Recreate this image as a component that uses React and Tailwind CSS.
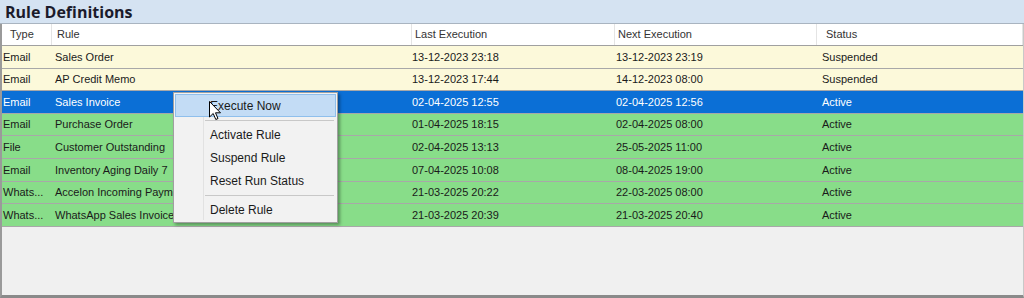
import React from "react";

const cols = [
  { w: "w-[50px]", pl: "pl-[1px]" },
  { w: "w-[360px]", pl: "pl-[3px]" },
  { w: "w-[203px]", pl: "pl-0" },
  { w: "w-[202px]", pl: "pl-[1px]" },
  { w: "flex-1", pl: "pl-[5px]" },
];

const rows = [
  ["Email", "Sales Order", "13-12-2023 23:18", "13-12-2023 23:19", "Suspended", "y"],
  ["Email", "AP Credit Memo", "13-12-2023 17:44", "14-12-2023 08:00", "Suspended", "y"],
  ["Email", "Sales Invoice", "02-04-2025 12:55", "02-04-2025 12:56", "Active", "s"],
  ["Email", "Purchase Order", "01-04-2025 18:15", "02-04-2025 08:00", "Active", "g"],
  ["File", "Customer Outstanding", "02-04-2025 13:13", "25-05-2025 11:00", "Active", "g"],
  ["Email", "Inventory Aging Daily 7", "07-04-2025 10:08", "08-04-2025 19:00", "Active", "g"],
  ["Whats...", "Accelon Incoming Payment", "21-03-2025 20:22", "22-03-2025 08:00", "Active", "g"],
  ["Whats...", "WhatsApp Sales Invoice", "21-03-2025 20:39", "21-03-2025 20:40", "Active", "g"],
];

const bgFor = {
  y: "bg-[#fcf9da] text-[#1a1a1a]",
  s: "bg-[#0b6fd6] text-white",
  g: "bg-[#88dd89] text-[#1a1a1a]",
};

function MenuItem({ children, active }) {
  return (
    <div
      className={
        "h-[23px] flex items-center pl-[34px] text-[12px] text-[#1a1a1a] " +
        (active ? "bg-[#c3dcf5] border border-[#8fbfec]" : "border border-transparent")
      }
    >
      {children}
    </div>
  );
}

function Sep() {
  return (
    <div className="h-[6px] flex items-center pl-[30px] pr-[2px]">
      <div className="h-px w-full bg-[#c8c8c8]" />
    </div>
  );
}

export default function App() {
  return (
    <div
      className="w-[1024px] h-[298px] bg-[#f0f0f0] flex flex-col relative overflow-hidden"
      style={{ fontFamily: '"Liberation Sans", Arial, sans-serif' }}
    >
      <div className="h-[24px] bg-[#d5e3f2] border-b border-[#a9b4c0] flex items-center pl-[5px]">
        <span
          className="text-[16px] font-bold text-[#1b1b2b]"
          style={{ fontFamily: '"Open Sans", "Noto Sans", sans-serif' }}
        >
          Rule Definitions
        </span>
      </div>
      <div className="flex-1 flex flex-col border-l-2 border-[#9a9a9a] border-r border-r-[#c8c8c8] border-b-[3px] border-b-[#8a8a8a]">
        <div className="h-[22px] bg-white border-b border-[#a0a0a0] flex text-[11px] text-[#333]">
          {["Type", "Rule", "Last Execution", "Next Execution", "Status"].map((h, i) => (
            <div
              key={h}
              className={
                cols[i].w +
                " flex items-center border-r border-[#e4e4e4] " +
                (i === 0 ? "pl-[8px]" : i === 1 ? "pl-[5px]" : i === 4 ? "pl-[9px]" : "pl-[3px]")
              }
            >
              {h}
            </div>
          ))}
        </div>
        {rows.map((r, ri) => (
          <div
            key={ri}
            className={
              "h-[22.6px] flex text-[11px] border-b border-[#a8a8a8] " + bgFor[r[5]]
            }
          >
            {r.slice(0, 5).map((c, ci) => (
              <div
                key={ci}
                className={cols[ci].w + " " + cols[ci].pl + " flex items-center whitespace-nowrap overflow-hidden"}
              >
                {c}
              </div>
            ))}
          </div>
        ))}
      </div>

      <div
        className="absolute left-[173px] top-[92px] w-[165px] bg-[#f2f2f2] border border-[#a0a0a0] p-[1px] shadow-[2px_2px_3px_rgba(0,0,0,0.35)]"
        style={{ fontFamily: '"Liberation Sans", Arial, sans-serif' }}
      >
        <div className="absolute left-[29px] top-[24px] bottom-[2px] w-px bg-[#e2e2e2]" />
        <MenuItem active>Execute Now</MenuItem>
        <Sep />
        <MenuItem>Activate Rule</MenuItem>
        <MenuItem>Suspend Rule</MenuItem>
        <MenuItem>Reset Run Status</MenuItem>
        <Sep />
        <MenuItem>Delete Rule</MenuItem>
      </div>

      <svg
        className="absolute left-[209px] top-[101px]"
        width="13"
        height="20"
        viewBox="0 0 13 20"
      >
        <path
          d="M0.5 0.5 L0.5 16 L4.2 12.5 L6.8 18.5 L9 17.5 L6.5 11.8 L11.5 11.8 Z"
          fill="white"
          stroke="black"
          strokeWidth="1"
          strokeLinejoin="round"
        />
      </svg>
    </div>
  );
}
